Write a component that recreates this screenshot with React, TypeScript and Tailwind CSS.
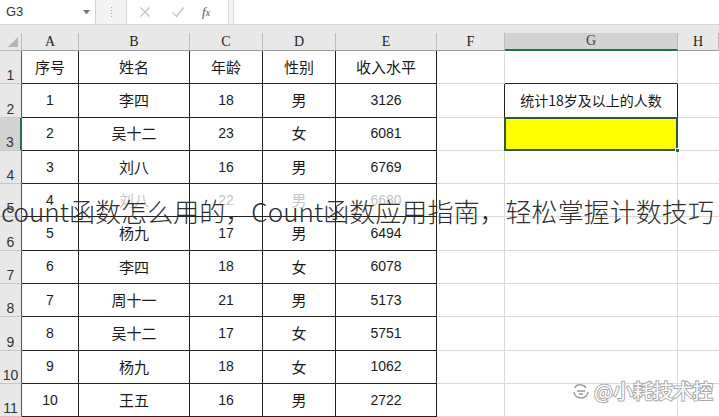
import React from "react";

const letters = ["A", "B", "C", "D", "E", "F", "G", "H"];

const data: string[][] = [
  ["序号", "姓名", "年龄", "性别", "收入水平"],
  ["1", "李四", "18", "男", "3126"],
  ["2", "吴十二", "23", "女", "6081"],
  ["3", "刘八", "16", "男", "6769"],
  ["4", "刘八", "22", "男", "6680"],
  ["5", "杨九", "17", "男", "6494"],
  ["6", "李四", "18", "女", "6078"],
  ["7", "周十一", "21", "男", "5173"],
  ["8", "吴十二", "17", "女", "5751"],
  ["9", "杨九", "18", "女", "1062"],
  ["10", "王五", "16", "男", "2722"],
];

const cjk = "font-['Noto_Sans_CJK_SC',sans-serif]";
const num = "font-['Liberation_Sans',sans-serif]";

function isNum(s: string) {
  return /^[0-9]+$/.test(s);
}

export default function App() {
  return (
    <div className="relative w-[719px] h-[417px] overflow-hidden bg-white select-none">
      {/* formula bar */}
      <div className="h-[24px] flex bg-[#f3f3f3]">
        <div className="w-[96px] h-[24px] bg-white flex items-center justify-between pl-[6px] pr-[5px] border-r border-[#d4d4d4]">
          <span className={`text-[13px] text-[#333] ${num}`}>G3</span>
          <svg width="7" height="5" viewBox="0 0 7 5"><path d="M0 0h7L3.5 4.5z" fill="#777" /></svg>
        </div>
        <div className="w-[30px] flex items-center justify-center">
          <div className="flex flex-col gap-[2px]">
            <div className="w-[1px] h-[1px] bg-[#aaa]" />
            <div className="w-[1px] h-[1px] bg-[#aaa]" />
            <div className="w-[1px] h-[1px] bg-[#aaa]" />
            <div className="w-[1px] h-[1px] bg-[#aaa]" />
          </div>
        </div>
        <div className="w-[103px] bg-white flex items-center border-x border-[#d8d8d8]">
          <svg className="ml-[12px]" width="12" height="12" viewBox="0 0 12 12"><path d="M1.5 1.5l9 9M10.5 1.5l-9 9" stroke="#c4c4c4" strokeWidth="1.3" /></svg>
          <svg className="ml-[20px]" width="14" height="12" viewBox="0 0 14 12"><path d="M1.5 6.5l4 4 7-9" stroke="#c4c4c4" strokeWidth="1.4" fill="none" /></svg>
          <span className="ml-[17px] text-[13px] italic text-[#555] font-['Liberation_Serif',serif]">f<span className="text-[10px]">x</span></span>
        </div>
        <div className="w-[4px]" />
        <div className="flex-1 bg-white border-l border-[#d8d8d8]" />
      </div>
      <div className="h-[9px] bg-[#e8e8e8] border-t border-[#d6d6d6]" />

      {/* grid */}
      <div className="grid grid-cols-[22px_57px_111px_73px_73px_101px_68px_173px_41px] grid-rows-[18px_repeat(11,33.3px)]">
        <div className="bg-[#e8e8e8] border-r border-b border-[#b8b8b8] relative">
          <svg className="absolute right-[3px] bottom-[3px]" width="10" height="10" viewBox="0 0 10 10"><path d="M10 0v10H0z" fill="#b4b4b4" /></svg>
        </div>
        {letters.map((l) => {
          const sel = l === "G";
          return (
            <div
              key={l}
              className={`flex items-end justify-center text-[14px] leading-[16px] font-['Liberation_Serif',serif] ${
                sel
                  ? "bg-[#d2d2d2] text-[#444] border-b-2 border-b-[#217346] border-r border-r-[#b8b8b8]"
                  : "bg-[#e8e8e8] text-[#222] border-r border-b border-r-[#bcbcbc] border-b-[#9a9a9a]"
              }`}
            >
              {l}
            </div>
          );
        })}

        {data.map((row, ri) => {
          const r = ri + 1;
          const selRow = r === 3;
          return (
            <React.Fragment key={r}>
              <div
                className={`flex items-end justify-center text-[14px] leading-[16px] text-[#333] ${num} border-b border-b-[#c8c8c8] ${
                  selRow ? "bg-[#d2d2d2] border-r-2 border-r-[#217346]" : "bg-[#e8e8e8] border-r border-r-[#555]"
                }`}
              >
                {r}
              </div>
              {row.map((v, ci) => {
                const faded = r === 5 && ci > 0;
                return (
                  <div
                    key={ci}
                    className={`flex items-center justify-center border-r border-b border-[#222] ${
                      isNum(v) ? `text-[14px] ${num}` : `text-[15px] ${cjk}`
                    } ${faded ? "text-[#c4c4c4]" : "text-[#1a1a1a]"}`}
                  >
                    {v}
                  </div>
                );
              })}
              <div className={`border-r border-b border-b-[#dadada] ${r === 2 ? "border-r-[#222]" : "border-r-[#dadada]"}`} />
              {r === 2 ? (
                <div className={`flex items-center justify-center border-r border-b border-[#222] text-[14px] text-[#1a1a1a] ${cjk}`}>
                  统计18岁及以上的人数
                </div>
              ) : r === 3 ? (
                <div className="relative bg-[#ffff00] border-r border-b border-[#dadada]">
                  <div className="absolute inset-[-1px] border-2 border-[#2d5c3c]" />
                  <div className="absolute right-[-3px] bottom-[-3px] w-[5px] h-[5px] bg-[#217346] border border-white" />
                </div>
              ) : (
                <div className={`border-r border-b border-r-[#dadada] ${r === 1 ? "border-b-[#222]" : "border-b-[#dadada]"}`} />
              )}
              <div className="border-b border-[#dadada]" />
            </React.Fragment>
          );
        })}
      </div>

      {/* overlay title */}
      <div className={`absolute left-[1px] top-[195px] text-[26px] leading-[32px] tracking-[0.05px] whitespace-nowrap text-[#2e2e2e] ${cjk} font-light`}>
        count函数怎么用的，Count函数应用指南，轻松掌握计数技巧
      </div>

      {/* bottom-right watermark */}
      <div className="absolute right-[6px] bottom-[14px] flex items-center gap-[4px]">
        <svg width="18" height="18" viewBox="0 0 18 18">
          <path d="M3 6c1-3 4-4 6-3M9 3c2 0 4 1 5 3M2 10c0 3 3 6 7 6s7-3 7-6M5 9h8M7 12h4" stroke="#9a9a9a" strokeWidth="1.4" fill="white" />
        </svg>
        <span className={`text-[20px] leading-[24px] text-white [-webkit-text-stroke:2px_#a8a8a8] [paint-order:stroke_fill] ${cjk}`}>
          @小耗技术控
        </span>
      </div>
    </div>
  );
}
